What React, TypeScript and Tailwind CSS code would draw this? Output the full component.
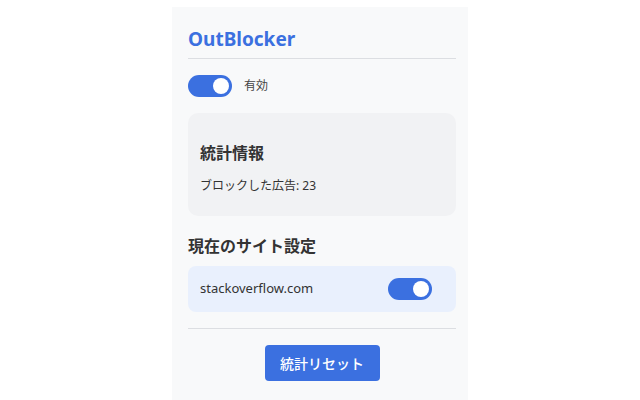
import React, { useState } from 'react';

const Toggle: React.FC<{ on: boolean; onChange: () => void }> = ({ on, onChange }) => (
  <button
    onClick={onChange}
    className={`relative w-[44px] h-[22px] rounded-full shrink-0 ${on ? 'bg-[#3b70e0]' : 'bg-[#c8ccd2]'}`}
  >
    <span
      className={`absolute top-[3px] w-[16px] h-[16px] rounded-full bg-white ${on ? 'left-[25px]' : 'left-[3px]'}`}
    />
  </button>
);

const App: React.FC = () => {
  const [enabled, setEnabled] = useState(true);
  const [siteOn, setSiteOn] = useState(true);
  const [blocked, setBlocked] = useState(23);

  return (
    <div
      className="w-full min-h-[400px] flex justify-center bg-white pt-[7px]"
      style={{ fontFamily: '"Noto Sans", "Noto Sans CJK JP", sans-serif' }}
    >
      <div className="w-[296px] bg-[#f8f9fa] pl-4 pr-3 pt-[18px] pb-[19px] flex flex-col">
        <h1 className="text-[19px] leading-[28px] font-bold text-[#3b70e0] pb-[5px] border-b border-[#dcdee2]">
          OutBlocker
        </h1>

        <div className="flex items-center gap-3 mt-[16px]">
          <Toggle on={enabled} onChange={() => setEnabled(!enabled)} />
          <span className="text-[12px] text-[#444]">有効</span>
        </div>

        <div className="mt-[16px] rounded-[10px] bg-[#f1f2f4] px-3 pt-[28px] pb-[21px]">
          <h3 className="text-[16px] leading-[24px] font-bold text-[#333]">統計情報</h3>
          <p className="mt-[12px] text-[12px] leading-[18px] text-[#333]">ブロックした広告: {blocked}</p>
        </div>

        <h3 className="mt-[18px] text-[16px] leading-[24px] font-bold text-[#333]">現在のサイト設定</h3>

        <div className="mt-[8px] h-[46px] rounded-[8px] bg-[#e9f0fd] pl-3 pr-6 flex items-center justify-between">
          <span className="text-[13px] text-[#333]">stackoverflow.com</span>
          <Toggle on={siteOn} onChange={() => setSiteOn(!siteOn)} />
        </div>

        <div className="mt-[16px] border-t border-[#dcdee2]" />

        <div className="flex justify-center mt-[16px]">
          <button
            onClick={() => setBlocked(0)}
            className="w-[115px] h-[36px] rounded-[4px] bg-[#3b70e0] text-white text-[14px] font-medium"
          >
            統計リセット
          </button>
        </div>
      </div>
    </div>
  );
};

export default App;
